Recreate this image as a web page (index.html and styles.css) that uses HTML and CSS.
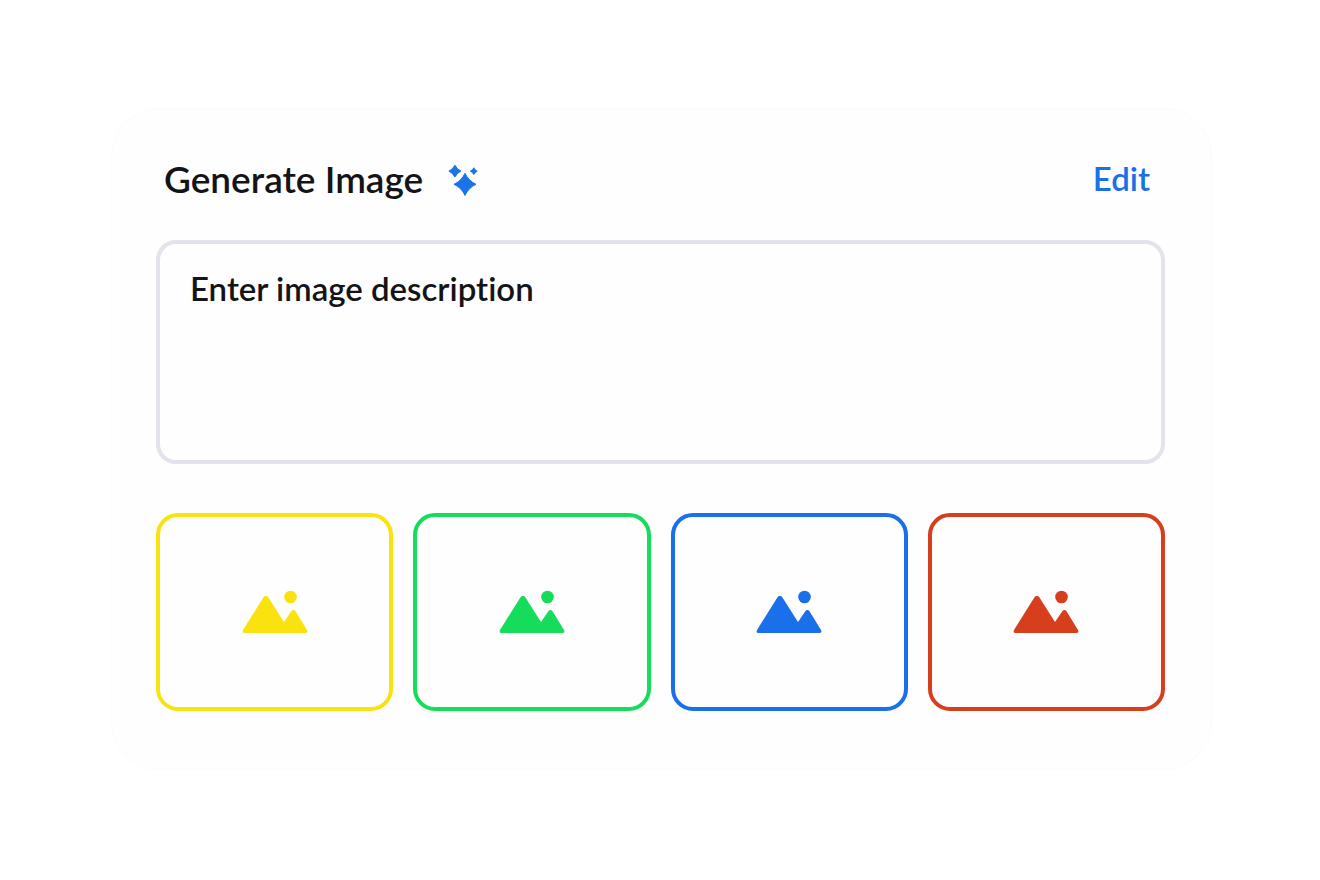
FILE: index.html
```html
<!DOCTYPE html>
<html lang="en">
<head>
<meta charset="utf-8">
<meta name="viewport" content="width=device-width, initial-scale=1">
<title>Generate Image</title>
<link rel="stylesheet" href="styles.css">
</head>
<body>
<svg class="defs" aria-hidden="true">
  <symbol id="picture" viewBox="0 0 66 44">
    <path d="M2.500 43C.9 43 .1 41.400 1 40L21.500 7.200C22.600 5.500 25.200 5.500 26.300 7.200L42 32L49.300 21.200C50.400 19.600 52.400 19.600 53.500 21.200L65 40C65.900 41.400 65.100 43 63.500 43Z"/>
    <circle cx="48.500" cy="7" r="6.300"/>
  </symbol>
</svg>
<main class="card">
  <header class="header">
    <h1 class="title"><label for="description">Generate Image</label></h1>
    <svg class="sparkle" viewBox="0 0 30 32" aria-hidden="true">
      <path d="M17 9.200Q20.500 16.800 28 20.300Q20.500 23.800 17 31.400Q13.500 23.800 6 20.300Q13.500 16.800 17 9.200Z"/>
      <path d="M6.900 1.200Q8.800 5.200 12.900 7.100Q8.800 9 6.900 13Q5 9 .9 7.100Q5 5.200 6.900 1.200Z"/>
      <path d="M25.800 3.800Q26.800 6.200 29.200 7.200Q26.800 8.200 25.800 10.600Q24.800 8.200 22.400 7.200Q24.800 6.200 25.800 3.800Z"/>
    </svg>
    <button class="edit" type="button">Edit</button>
  </header>
  <textarea class="description" id="description" placeholder="Enter image description"></textarea>
  <div class="tiles">
    <button class="tile yellow" type="button" aria-label="Yellow image"><svg class="picture"><use href="#picture"/></svg></button>
    <button class="tile green" type="button" aria-label="Green image"><svg class="picture"><use href="#picture"/></svg></button>
    <button class="tile blue" type="button" aria-label="Blue image"><svg class="picture"><use href="#picture"/></svg></button>
    <button class="tile red" type="button" aria-label="Red image"><svg class="picture"><use href="#picture"/></svg></button>
  </div>
</main>
</body>
</html>
```
FILE: styles.css
```css
* {
  box-sizing: border-box;
}

body {
  margin: 0;
  padding: 108px 108px 108px 111px;
  background: #fff;
  color: #141417;
  font-family: Lato, "Open Sans", sans-serif;
  font-weight: 600;
  font-variant-ligatures: none;
}

.defs {
  position: absolute;
  width: 0;
  height: 0;
}

.card {
  padding: 48px 46px 58px 44px;
  border: 1px solid #fbfbfb;
  border-radius: 48px;
  background: #fefefe;
}

.header {
  display: flex;
  align-items: center;
  height: 44px;
  margin-bottom: 39px;
  padding: 0 15px 0 8px;
}

.title {
  margin: 0;
  font-size: 37px;
  font-weight: 600;
  line-height: 44px;
}

.sparkle {
  width: 30px;
  height: 32px;
  margin: 2px 0 0 25px;
  fill: #1a73e8;
  stroke: #1a73e8;
  stroke-linejoin: round;
}

.edit {
  margin-left: auto;
  padding: 0 0 2px;
  border: 0;
  background: none;
  color: #1a70e8;
  font: inherit;
  font-size: 33px;
  line-height: 40px;
  cursor: pointer;
}

.description {
  display: block;
  width: 100%;
  height: 224px;
  padding: 24px 30px;
  border: 4px solid #e2e3eb;
  border-radius: 20px;
  outline: 0;
  background: #fefefe;
  color: inherit;
  font: inherit;
  font-variant-ligatures: none;
  font-size: 33px;
  line-height: 40px;
  resize: none;
}

.description::placeholder {
  color: inherit;
  opacity: 1;
}

.tiles {
  display: grid;
  grid-template-columns: repeat(4, 1fr);
  gap: 20px;
  margin-top: 49px;
}

.tile {
  display: flex;
  align-items: center;
  justify-content: center;
  height: 198px;
  padding: 0;
  border: 4px solid currentColor;
  border-radius: 22px;
  background: #fefefe;
  cursor: pointer;
}

.picture {
  width: 66px;
  height: 44px;
  fill: currentColor;
}

.yellow {
  color: #fae20e;
}

.green {
  color: #16dc5c;
}

.blue {
  color: #1a70e8;
}

.red {
  color: #d63e1c;
}
```
